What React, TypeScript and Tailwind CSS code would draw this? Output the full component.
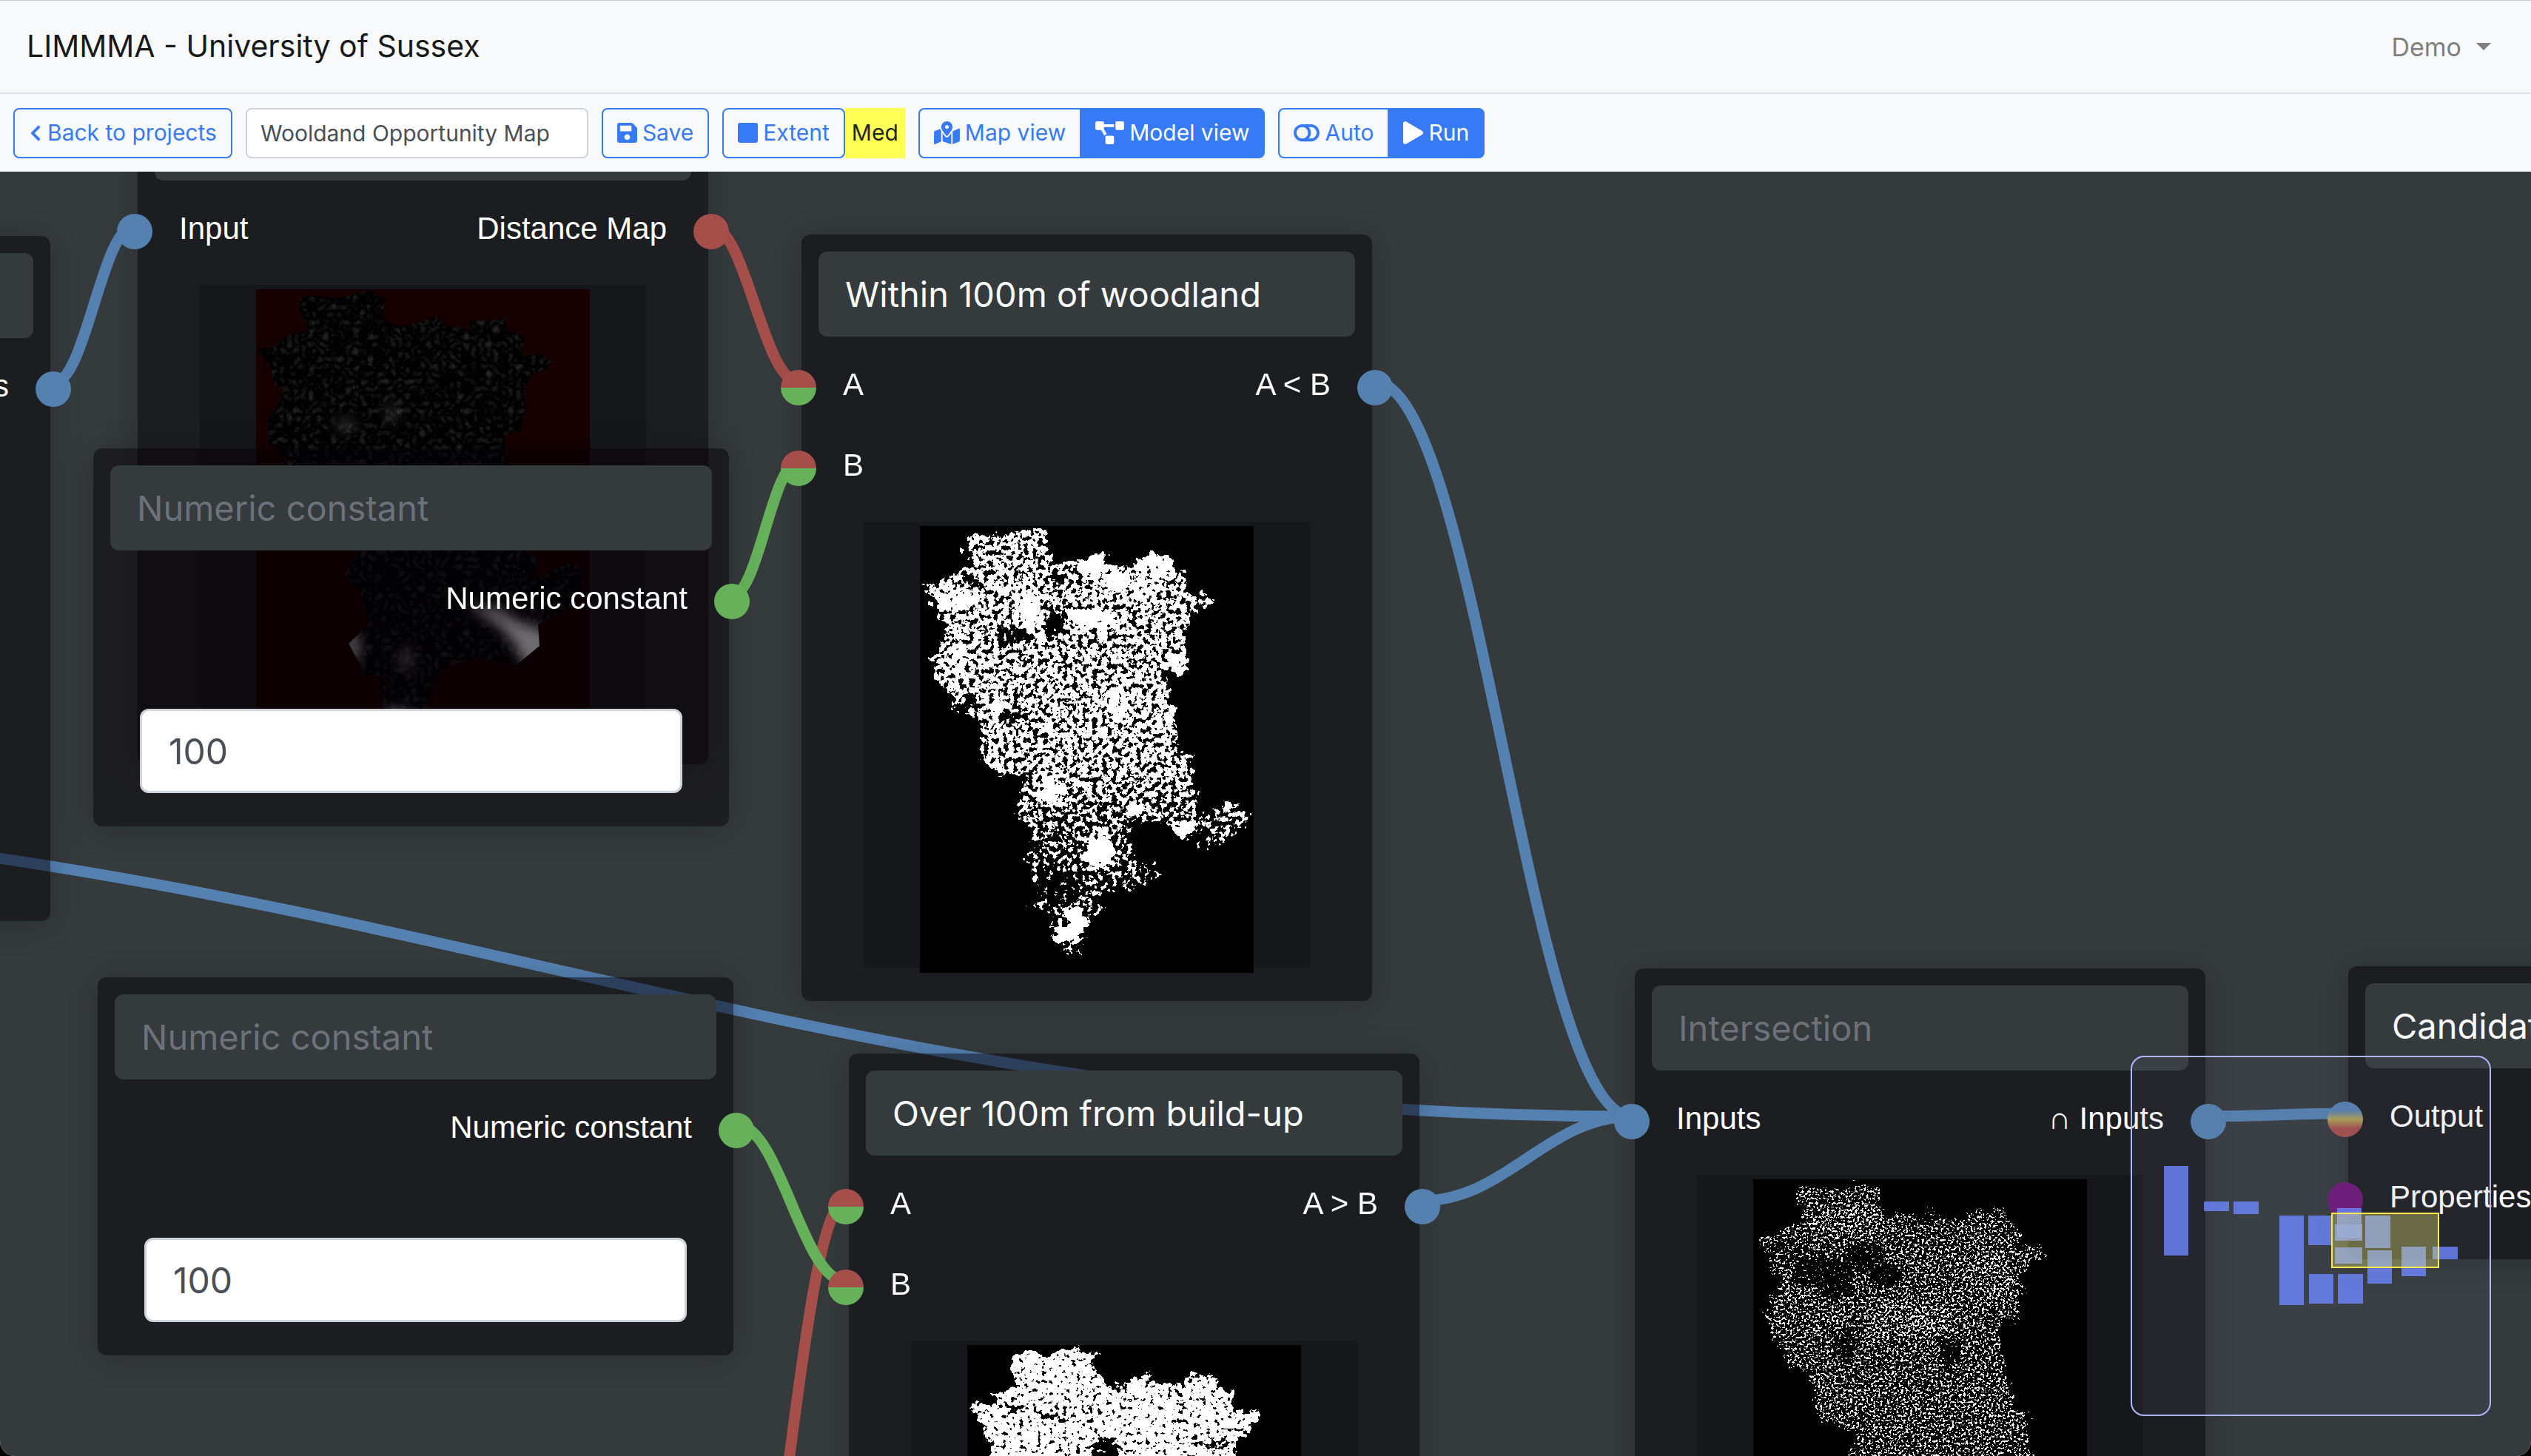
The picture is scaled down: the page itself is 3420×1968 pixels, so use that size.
import type { ReactNode } from 'react'
import { FaChevronLeft, FaMapMarkedAlt, FaPlay, FaProjectDiagram, FaSave, FaSquare, FaToggleOff } from 'react-icons/fa'

type Kind = 'blue' | 'red' | 'green' | 'mixed' | 'output' | 'purple'
type Row = { input?: string; inKind?: Kind; output?: string; outKind?: Kind }

const socketStyles: Record<Kind, string> = {
  blue: 'bg-[#5581b1]',
  red: 'bg-[#a54e4a]',
  green: 'bg-[#67b15b]',
  mixed: 'bg-[linear-gradient(#a54e4a_49%,#67b15b_50%)]',
  output: 'bg-[linear-gradient(#5581b1_25%,#b1a152_50%,#a54e4a_75%)]',
  purple: 'bg-[#6f1679]',
}

const wires = [
  { from: [72, 286], to: [182, 73], color: '#5581b1' },
  { from: [-725, 875], to: [2205, 1277], color: '#5581b1' },
  { from: [1857, 284], to: [2205, 1277], color: '#5581b1' },
  { from: [1921, 1391], to: [2205, 1277], color: '#5581b1' },
  { from: [2983, 1277], to: [3169, 1273], color: '#5581b1' },
  { from: [960, 73], to: [1079, 284], color: '#a54e4a' },
  { from: [986, 2117], to: [1143, 1391], color: '#a54e4a' },
  { from: [989, 573], to: [1079, 393], color: '#67b15b' },
  { from: [995, 1288], to: [1143, 1500], color: '#67b15b' },
]

const miniNodes = [
  [43, 147, 33, 121],
  [97, 195, 34, 13],
  [137, 195, 34, 17],
  [199, 214, 33, 121],
  [238, 214, 33, 40],
  [277, 204, 33, 40],
  [274, 226, 37, 22],
  [274, 257, 37, 22],
  [315, 214, 34, 44],
  [318, 261, 33, 45],
  [364, 256, 33, 40],
  [406, 256, 34, 17],
  [239, 293, 33, 40],
  [278, 293, 34, 40],
]

// County boundary, split so the southern part can vary between layers
const northEast =
  'M59 12 81 8 110 12 130 7 153 1 164 9 176 12 171 27 176 43 193 50 219 46 243 36 256 49 270 50 290 55 289 42 311 43 336 37 339 54 362 64 359 90 382 87 401 98 391 108 374 114 362 137 365 161 356 192 336 197 336 219 338 259 351 277 351 304 372 313 371 353 378 366 376 387 391 387 417 370 434 375 447 393'
const south =
  '427 428 381 453 383 482 349 510 300 497 265 508 250 517 234 545 230 580 174 580 167 545 167 522 149 522 125 479 149 456 149 436 139 408 119 385 139 353'
const southWoodland =
  '437 413 414 427 388 440 385 409 365 433 351 420 331 398 311 402 287 402 287 438 316 456 329 478 287 491 253 491 244 527 225 532 225 549 216 566 224 585 219 587 199 576 193 561 173 547 176 523 138 514 164 496 144 469 144 442 150 411 130 396 130 373'
const northWest =
  '144 340 115 335 88 326 80 300 81 268 46 248 38 224 17 208 15 177 32 152 38 134 25 130 21 108 2 81 24 78 44 61 69 56 68 45 58 32Z'

const county = `${northEast} ${south} ${northWest}`
const woodland = `${northEast} ${southWoodland} ${northWest}`

// cx, cy, rx, ry, density
const woodlandPatches = [
  [46, 99, 30, 16, 0.7],
  [147, 112, 16, 26, 0.76],
  [239, 54, 17, 16, 0.78],
  [322, 52, 26, 16, 0.74],
  [268, 74, 16, 12, 0.78],
  [233, 125, 30, 13, 0.74],
  [268, 237, 16, 24, 0.74],
  [52, 175, 12, 24, 0.68],
  [345, 188, 14, 11, 0.78],
  [110, 86, 14, 10, 0.7],
  [305, 85, 20, 14, 0.66],
  [110, 245, 16, 10, 0.7],
  [335, 255, 10, 20, 0.68],
  [176, 355, 18, 18, 0.78],
  [291, 382, 12, 10, 0.72],
  [357, 409, 11, 10, 0.72],
  [417, 378, 10, 6, 0.72],
  [242, 440, 18, 26, 0.82],
  [210, 534, 14, 20, 0.95],
  [196, 552, 20, 11, 0.95],
  [127, 148, 26, 12, 0.36],
  [184, 132, 12, 22, 0.34],
  [127, 255, 16, 12, 0.38],
  [67, 74, 12, 8, 0.4],
  [184, 67, 14, 9, 0.4],
  [190, 488, 28, 26, 0.33],
  [66, 240, 12, 14, 0.38],
]

const builtUpPatches = [
  [186, 150, 16, 26, 0.3],
  [66, 84, 22, 6, 0.44],
  [115, 96, 26, 6, 0.5],
  [205, 54, 14, 5, 0.42],
  [325, 134, 28, 5, 0.42],
  [170, 90, 4, 34, 0.54],
  [290, 85, 4, 38, 0.54],
  [230, 160, 20, 5, 0.45],
]

const intersectionPatches = [
  [45, 100, 26, 20, 0.38],
  [95, 125, 42, 20, 0.3],
  [150, 105, 26, 16, 0.3],
  [180, 130, 22, 14, 0.28],
  [240, 50, 16, 10, 0.3],
  [110, 150, 22, 14, 0.3],
  [265, 235, 14, 22, 0.32],
  [125, 225, 14, 22, 0.33],
  [210, 190, 60, 24, 0.47],
  [320, 130, 30, 34, 0.46],
  [125, 60, 50, 22, 0.46],
]

const grey = (density: number) => {
  const level = Math.round(density * 255)
  return `rgb(${level},${level},${level})`
}

function DensityMap({ id, shape, base, southBase, patches, frequency, seed }: {
  id: string
  shape: string
  base: number
  southBase: number
  patches: number[][]
  frequency: number
  seed: number
}) {
  return (
    <svg className="mt-[6px] h-[604px] w-[451px] shrink-0 bg-black" viewBox="0 0 451 604" aria-hidden="true">
      <defs>
        <linearGradient id={`${id}-fill`} x1="0" y1="0" x2="0" y2="1">
          <stop offset="0.55" stopColor={grey(base)} />
          <stop offset="0.75" stopColor={grey(southBase)} />
        </linearGradient>
        {/* noise + density - 1, pushed to pure white or nothing */}
        <filter id={`${id}-noise`} x="0" y="0" width="451" height="604" filterUnits="userSpaceOnUse" colorInterpolationFilters="sRGB">
          <feGaussianBlur in="SourceGraphic" stdDeviation="1.5" result="soft" />
          <feTurbulence type="fractalNoise" baseFrequency="0.07" numOctaves={3} seed={seed + 1} result="warp" />
          <feDisplacementMap in="soft" in2="warp" scale="26" xChannelSelector="R" yChannelSelector="G" />
          <feColorMatrix values="0 0 0 0 0  0 0 0 0 0  0 0 0 0 0  1 0 0 0 0" result="density" />
          <feTurbulence type="fractalNoise" baseFrequency={frequency} numOctaves={3} seed={seed} />
          <feColorMatrix values="0 0 0 0 0  0 0 0 0 0  0 0 0 0 0  1 0 0 0 0" result="noise" />
          <feComposite in="noise" in2="density" operator="arithmetic" k1="0" k2="1" k3="1" k4="-1" />
          <feColorMatrix values="0 0 0 0 1  0 0 0 0 1  0 0 0 0 1  0 0 0 40 0" />
        </filter>
      </defs>
      <g filter={`url(#${id}-noise)`}>
        <rect width="451" height="604" fill="#000" />
        <path d={shape} fill={`url(#${id}-fill)`} />
        {patches.map(([cx, cy, rx, ry, density]) => (
          <ellipse key={`${cx}-${cy}`} cx={cx} cy={cy} rx={rx} ry={ry} fill={grey(density)} />
        ))}
      </g>
    </svg>
  )
}

function DistanceMap() {
  return (
    <svg className="mt-[6px] h-[604px] w-[451px] shrink-0 bg-[#170000]" viewBox="0 0 451 604" aria-hidden="true">
      <defs>
        <clipPath id="distance-clip">
          <path d={county} />
        </clipPath>
        <filter id="distance-noise" x="0" y="0" width="451" height="604" filterUnits="userSpaceOnUse" colorInterpolationFilters="sRGB">
          <feTurbulence type="turbulence" baseFrequency="0.1" numOctaves={3} seed={8} />
          <feColorMatrix values="0 0 0 0 1  0 0 0 0 1  0 0 0 0 1  0.26 0 0 0 -0.06" />
        </filter>
        <filter id="distance-glow" x="-50%" y="-50%" width="200%" height="200%">
          <feGaussianBlur stdDeviation="9" />
        </filter>
      </defs>
      <path d={county} fill="#000" />
      <g clipPath="url(#distance-clip)">
        <rect width="451" height="604" filter="url(#distance-noise)" />
        <g fill="#fff" filter="url(#distance-glow)">
          <ellipse cx="122" cy="184" rx="14" ry="6" opacity="0.25" />
          <ellipse cx="183" cy="168" rx="5" ry="14" opacity="0.25" />
          <ellipse cx="130" cy="484" rx="9" ry="22" opacity="0.7" />
          <path d="M285 425 325 432 355 450 395 462 400 495 365 512 350 480 330 455Z" opacity="0.85" />
          <ellipse cx="203" cy="500" rx="8" ry="16" opacity="0.35" />
          <ellipse cx="190" cy="580" rx="18" ry="10" opacity="0.9" />
        </g>
      </g>
    </svg>
  )
}

function Socket({ kind }: { kind: Kind }) {
  return <span className={`size-12 shrink-0 rounded-full ${socketStyles[kind]}`} />
}

function Node({ x, y, wide, title, placeholder, rows, children }: {
  x: number
  y: number
  wide?: boolean
  title?: string
  placeholder?: string
  rows: Row[]
  children?: ReactNode
}) {
  return (
    <section
      className={`absolute rounded-xl bg-[#030005]/50 shadow-[0_4px_44px_rgba(0,0,0,0.2)] ${wide ? 'w-[859px]' : 'w-[771px]'}`}
      style={{ left: x, top: y }}
    >
      <div className="px-[23px] pt-[23px]">
        <input
          aria-label="Node name"
          className="h-[115px] w-full rounded-xl bg-[#353a3d] px-9 text-[47px] text-[#f8f9fa] placeholder:text-[#6c717a]"
          defaultValue={title}
          placeholder={placeholder}
        />
      </div>
      <div className="-mx-7 pt-[14px]">
        {rows.map((row, i) => (
          <div key={i} className="flex h-[109px] items-center justify-between font-['Liberation_Sans',Arial,sans-serif] text-[42px] text-white">
            <div className="flex items-center gap-9">
              {row.inKind && <Socket kind={row.inKind} />}
              {row.input && <span className="pb-2">{row.input}</span>}
            </div>
            <div className="flex items-center gap-9">
              {row.output && <span className="pb-2">{row.output}</span>}
              {row.outKind && <Socket kind={row.outKind} />}
            </div>
          </div>
        ))}
      </div>
      {children}
    </section>
  )
}

function Preview({ children }: { children?: ReactNode }) {
  return (
    <div className="px-[84px] pt-[18px] pb-[45px]">
      <div className="flex h-[603px] items-start justify-center bg-black/20">{children}</div>
    </div>
  )
}

function NumberField() {
  return (
    <div className="px-[63px] pt-[91px] pb-[45px]">
      <input
        aria-label="Numeric constant value"
        className="h-[114px] w-full rounded-xl border-3 border-[#ced4da] bg-white px-9 text-[48px] text-[#495057]"
        defaultValue="100"
      />
    </div>
  )
}

function Wires() {
  return (
    <svg className="absolute inset-0 size-full" fill="none" strokeWidth="15" aria-hidden="true">
      {wires.map(({ from: [x1, y1], to: [x2, y2], color }) => {
        const handle = (x2 - x1) * 0.4
        return (
          <path
            key={`${x1}-${y1}`}
            d={`M${x1} ${y1}C${x1 + handle} ${y1} ${x2 - handle} ${y2} ${x2} ${y2}`}
            stroke={color}
          />
        )
      })}
    </svg>
  )
}

function Minimap() {
  return (
    <div className="absolute right-[54px] bottom-[54px] size-[487px] rounded-[18px] border-2 border-[#b1b7ff] bg-[#6a7a90]/10">
      {miniNodes.map(([left, top, width, height]) => (
        <div key={`${left}-${top}`} className="absolute bg-[#6e88ff]/80" style={{ left, top, width, height }} />
      ))}
      <div className="absolute top-[210px] left-[269px] h-[75px] w-[146px] border-2 border-[#ffe94a] bg-[#fffb80]/32" />
    </div>
  )
}

const button = 'flex h-[68px] items-center gap-[7px] border-2 border-[#367af6] px-[19px]'
const outline = 'text-[#367af6]'
const solid = 'bg-[#367af6] text-white'

export default function App() {
  return (
    <div className="h-screen bg-black font-['Inter',sans-serif]">
      <div className="flex h-full flex-col overflow-hidden rounded-b-[20px] bg-[#f8f9fb]">
        <header className="flex h-[127px] shrink-0 items-center justify-between border-t border-b-2 border-t-[#c8c9cb] border-b-[#dee1e8] px-9">
          <a href="#" className="text-[41px] text-[#18191a]">
            LIMMMA - University of Sussex
          </a>
          <button type="button" className="mr-[18px] flex items-center gap-5 text-[34px] text-[#7f7f7f]">
            Demo
            <span className="border-x-10 border-t-10 border-x-transparent border-t-[#7f7f7f]" />
          </button>
        </header>

        <div className="flex h-[105px] shrink-0 items-center gap-[18px] px-[18px] text-[30px]">
          <button type="button" className={`${button} ${outline} rounded-lg`}>
            <FaChevronLeft className="h-6 w-[18px]" />
            Back to projects
          </button>
          <input
            aria-label="Project name"
            className="h-[68px] w-[463px] rounded-lg border-2 border-[#ced4da] bg-white px-[18px] text-[#495057]"
            defaultValue="Wooldand Opportunity Map"
          />
          <button type="button" className={`${button} ${outline} rounded-lg`}>
            <FaSave className="h-[31px] w-[27px]" />
            Save
          </button>
          <div className="flex">
            <button type="button" className={`${button} ${outline} rounded-lg`}>
              <FaSquare className="h-[31px] w-[27px]" />
              Extent
            </button>
            <span className="flex items-center bg-[#ffff54] px-[9px] text-[#212529]">Med</span>
          </div>
          <div className="flex">
            <button type="button" className={`${button} ${outline} rounded-l-lg border-r-0`}>
              <FaMapMarkedAlt className="h-[31px] w-[35px]" />
              Map view
            </button>
            <button type="button" className={`${button} ${solid} rounded-r-lg`}>
              <FaProjectDiagram className="h-[31px] w-[39px]" />
              Model view
            </button>
          </div>
          <div className="flex">
            <button type="button" className={`${button} ${outline} rounded-l-lg border-r-0`}>
              <FaToggleOff className="h-[31px] w-[35px]" />
              Auto
            </button>
            <button type="button" className={`${button} ${solid} rounded-r-lg`}>
              <FaPlay className="h-[31px] w-[27px]" />
              Run
            </button>
          </div>
        </div>

        <main className="relative flex-1 overflow-hidden bg-[#353a3d]">
          <Wires />
          <Node x={-703} y={87} rows={[{ output: 's', outKind: 'blue' }]}>
            <div className="h-[665px]" />
          </Node>
          <Node x={186} y={-126} rows={[{ input: 'Input', inKind: 'blue', output: 'Distance Map', outKind: 'red' }]}>
            <Preview>
              <DistanceMap />
            </Preview>
          </Node>
          <Node x={126} y={374} wide placeholder="Numeric constant" rows={[{ output: 'Numeric constant', outKind: 'green' }]}>
            <NumberField />
          </Node>
          <Node x={132} y={1089} wide placeholder="Numeric constant" rows={[{ output: 'Numeric constant', outKind: 'green' }]}>
            <NumberField />
          </Node>
          <Node
            x={1083}
            y={85}
            title="Within 100m of woodland"
            rows={[
              { input: 'A', inKind: 'mixed', output: 'A < B', outKind: 'blue' },
              { input: 'B', inKind: 'mixed' },
            ]}
          >
            <Preview>
              <DensityMap id="woodland" shape={woodland} base={0.56} southBase={0.45} patches={woodlandPatches} frequency={0.15} seed={4} />
            </Preview>
          </Node>
          <Node
            x={1147}
            y={1192}
            title="Over 100m from build-up"
            rows={[
              { input: 'A', inKind: 'mixed', output: 'A > B', outKind: 'blue' },
              { input: 'B', inKind: 'mixed' },
            ]}
          >
            <Preview>
              <DensityMap id="built-up" shape={county} base={0.67} southBase={0.67} patches={builtUpPatches} frequency={0.17} seed={11} />
            </Preview>
          </Node>
          <Node x={2209} y={1077} placeholder="Intersection" rows={[{ input: 'Inputs', inKind: 'blue', output: '∩ Inputs', outKind: 'blue' }]}>
            <Preview>
              <DensityMap id="intersection" shape={county} base={0.43} southBase={0.42} patches={intersectionPatches} frequency={0.32} seed={20} />
            </Preview>
          </Node>
          <Node
            x={3173}
            y={1074}
            title="Candidate"
            rows={[
              { input: 'Output', inKind: 'output' },
              { input: 'Properties', inKind: 'purple' },
            ]}
          >
            <div className="h-[26px]" />
          </Node>
          <Minimap />
        </main>
      </div>
    </div>
  )
}
